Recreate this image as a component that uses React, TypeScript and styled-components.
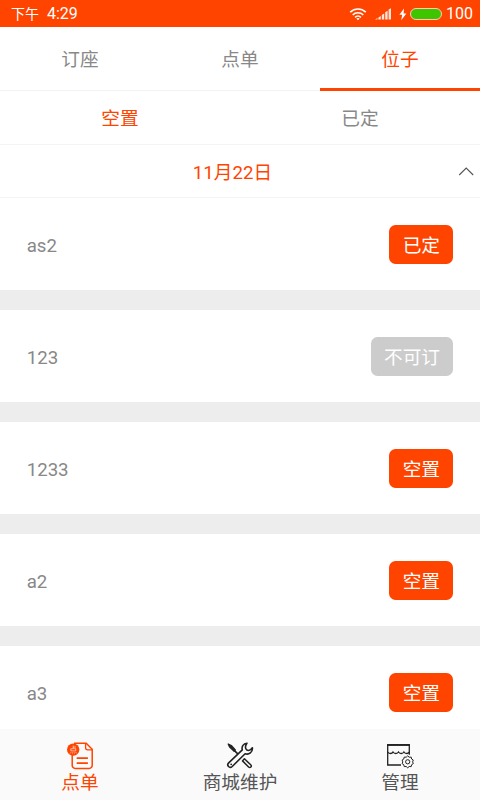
import React, { useState } from 'react'
import styled, { createGlobalStyle } from 'styled-components'

type Seat = {
  name: string
  status: string
  disabled?: boolean
}

const seats: Seat[] = [
  { name: 'as2', status: '已定' },
  { name: '123', status: '不可订', disabled: true },
  { name: '1233', status: '空置' },
  { name: 'a2', status: '空置' },
  { name: 'a3', status: '空置' },
]

const tabs = ['订座', '点单', '位子']
const filters = ['空置', '已定']

function WifiIcon() {
  return (
    <svg width='18' height='14' viewBox='0 0 18 14' fill='none' stroke='#fff' strokeWidth='1.6'>
      <path d='M1.2 5.2C5.7.9 12.3.9 16.8 5.2' />
      <path d='M3.7 7.9c3.1-2.9 7.5-2.9 10.6 0' />
      <path d='M6.1 10.3c1.8-1.6 4-1.6 5.8 0' />
      <path d='M7.3 11.6 9 13.2l1.7-1.6Q9 10.2 7.3 11.6z' fill='#fff' stroke='none' />
    </svg>
  )
}

function SignalIcon() {
  return (
    <svg width='17' height='12' viewBox='0 0 17 12' fill='#ffe6dc'>
      <path d='M0 11.5 2.4 10v1.5zM3.4 9.4l2.4-1.5v3.6H3.4zM6.8 7l2.4-1.4v5.9H6.8zM10.2 4.2l2.4-1.4v8.7h-2.4zM13.6 1.6 16 .3v11.2h-2.4z' />
    </svg>
  )
}

function BoltIcon() {
  return (
    <svg width='8' height='13' viewBox='0 0 8 13' fill='#fff'>
      <path d='M5 .5.4 6.8h2.8L2.2 12.3 7.4 5.4H4.6z' />
    </svg>
  )
}

function OrderIcon() {
  return (
    <svg width='28' height='28' viewBox='0 0 28 28' fill='none' stroke='#ff4400' strokeWidth='1.5'>
      <path d='M8 1.2h12.2l6 6v16.2a3 3 0 0 1-3 3H9.2a3 3 0 0 1-3-3V11' />
      <path d='M19.6 1.4v4.4a2 2 0 0 0 2 2h4.7' strokeWidth='1.3' />
      <path d='M10.7 16.2h11.2M10.7 21.2h11.2' strokeWidth='1.8' />
      <circle cx='7.2' cy='7.6' r='6.2' fill='#ff4400' stroke='none' />
      <path d='M7.2 3.6v3M7.2 5H10M4.8 6.7h5v2.2h-5zM4.1 11.4l.8-1.1M6.3 10.3l.2 1.2M8.1 10.3l.4 1.2M9.7 10.2l.9 1.1' stroke='#fff' strokeWidth='.6' />
    </svg>
  )
}

function ToolsIcon() {
  return (
    <svg width='28' height='28' viewBox='0 0 28 28' fill='none' stroke='#222' strokeLinejoin='round' strokeLinecap='round'>
      <path d='m2.2 2 3.1 1.5 4 4.5-1.2 1.2-4.5-4.1z' fill='#222' strokeWidth='1.3' />
      <path d='m8.5 8.6 3 3' strokeWidth='1.6' />
      <path
        d='M20.9 1.2c-3.4.3-5.6 3.2-4.6 6.7L2.7 20.9c-2.5 2.5.9 6 3.5 3.6L19.1 11.8c3.8 1.3 7.8-1.7 7.3-6.1-1.3 2-3.7 3.3-5.5 2.3-2-1.2-1.8-4.4 0-6.8z'
        strokeWidth='1.6'
      />
      <circle cx='5.2' cy='22.3' r='.9' fill='#222' stroke='none' />
      <path d='m18.4 16.8 6.3 6c1.6 1.6-.5 3.7-2.1 2.2l-6.1-6.1z' strokeWidth='1.5' />
    </svg>
  )
}

function ShopIcon() {
  return (
    <svg width='28' height='28' viewBox='0.7 0 28 28' fill='none' stroke='#222' strokeWidth='1.3'>
      <path d='M2.4 10.5V23h13.3M24 10.5v2.3M2.4 10.5V3H24v7.5' />
      <path d='M1.7 2.9h23' strokeWidth='1.7' />
      <path d='M2.4 10c1.2 2 4.3 2 5.3 0 1.3 2 4.3 2 5.5 0 1.2 2 4.2 2 5.4 0 1.3 2 4.3 2 5.4 0' />
      <path
        d='m22.4 13.9 1.5 1.3 2-.1.4 1.9 1.7 1-.7 1.9.7 1.7-1.7 1.1-.4 1.9-2-.1-1.5 1.3-1.5-1.3-2 .1-.4-1.9-1.7-1.1.7-1.7-.7-1.9 1.7-1 .4-1.9 2 .1z'
        strokeWidth='1'
        strokeLinejoin='round'
      />
      <circle cx='22.4' cy='19.8' r='2.1' strokeWidth='1' />
    </svg>
  )
}

const navItems = [
  { label: '点单', icon: <OrderIcon /> },
  { label: '商城维护', icon: <ToolsIcon /> },
  { label: '管理', icon: <ShopIcon /> },
]

export default function App() {
  const [tab, setTab] = useState(2)
  const [filter, setFilter] = useState(0)
  const [nav, setNav] = useState(0)

  return (
    <StyledScreen>
      <GlobalStyle />
      <StyledStatusBar>
        <StyledPeriod>下午</StyledPeriod>
        <span>4:29</span>
        <StyledStatusIcons>
          <WifiIcon />
          <SignalIcon />
          <BoltIcon />
          <StyledBattery />
          <span>100</span>
        </StyledStatusIcons>
      </StyledStatusBar>
      <StyledTabs>
        {tabs.map((label, index) => (
          <StyledTab key={label} $active={index === tab} onClick={() => setTab(index)}>
            {label}
          </StyledTab>
        ))}
      </StyledTabs>
      <StyledFilters>
        {filters.map((label, index) => (
          <StyledFilter key={label} $active={index === filter} onClick={() => setFilter(index)}>
            {label}
          </StyledFilter>
        ))}
      </StyledFilters>
      <StyledDate>
        <StyledDateText>11月22日</StyledDateText>
        <svg width='16' height='9' viewBox='0 0 16 9' fill='none' stroke='#555' strokeWidth='1.1'>
          <path d='m1.2 8 7-7 7 7' />
        </svg>
      </StyledDate>
      <StyledList>
        {seats.map((seat) => (
          <StyledRow key={seat.name}>
            <StyledName>{seat.name}</StyledName>
            <StyledButton disabled={seat.disabled}>{seat.status}</StyledButton>
          </StyledRow>
        ))}
      </StyledList>
      <StyledNav>
        {navItems.map((item, index) => (
          <StyledNavItem key={item.label} $active={index === nav} onClick={() => setNav(index)}>
            {item.icon}
            <span>{item.label}</span>
          </StyledNavItem>
        ))}
      </StyledNav>
    </StyledScreen>
  )
}

const GlobalStyle = createGlobalStyle`
  body {
    margin: 0;
  }
  * {
    box-sizing: border-box;
  }
`

const StyledScreen = styled.div`
  display: flex;
  flex-direction: column;
  width: 480px;
  height: 800px;
  overflow: hidden;
  background: #fff;
  color: #888;
  font-family: Roboto, 'Noto Sans CJK SC', sans-serif;
  font-size: 18.67px;
  font-weight: 400;
`

const StyledStatusBar = styled.div`
  display: flex;
  align-items: center;
  flex: none;
  height: 26.5px;
  padding: 2px 7px 0 11px;
  background: #ff4400;
  color: #fff;
  font-size: 16px;
  line-height: 24px;
`

const StyledPeriod = styled.span`
  margin-right: 8px;
  font-size: 14px;
`

const StyledStatusIcons = styled.div`
  display: flex;
  align-items: center;
  margin-left: auto;

  svg {
    flex: none;
    margin-right: 8px;
  }
  svg + svg {
    margin-right: 7px;
  }
  svg + svg + svg {
    margin-right: 3px;
  }
`

const StyledBattery = styled.div`
  width: 32px;
  height: 12px;
  margin-right: 4px;
  border: 1px solid #ffc9b3;
  border-radius: 6px;
  background: #3fc400;
`

const StyledTabs = styled.div`
  display: flex;
  flex: none;
  height: 64.5px;
  border-bottom: 1px solid #f2f2f2;
`

const StyledTab = styled.div<{ $active: boolean }>`
  display: flex;
  flex: 1;
  align-items: center;
  justify-content: center;
  padding-top: 1px;
  margin-bottom: -1px;
  border-bottom: 3px solid ${({ $active }) => ($active ? '#ff4400' : 'transparent')};
  color: ${({ $active }) => ($active ? '#ff4400' : 'inherit')};
`

const StyledFilters = styled.div`
  display: flex;
  flex: none;
  height: 54px;
  padding-bottom: 2px;
  border-bottom: 1px solid #f4f4f4;
`

const StyledFilter = styled.div<{ $active: boolean }>`
  display: flex;
  flex: 1;
  align-items: center;
  justify-content: center;
  color: ${({ $active }) => ($active ? '#ff4400' : 'inherit')};
`

const StyledDate = styled.div`
  display: flex;
  flex: none;
  align-items: center;
  height: 53.4px;
  padding: 0 6px;
  border-bottom: 1px solid #f4f4f4;
`

const StyledDateText = styled.span`
  flex: 1;
  padding: 0 0 1px 1px;
  color: #ff4400;
  text-align: center;
`

const StyledList = styled.div`
  display: flex;
  flex: 1;
  flex-direction: column;
  gap: 20px;
  min-height: 0;
  overflow: hidden;
  background: #ededed;
`

const StyledRow = styled.div`
  display: flex;
  flex: none;
  align-items: center;
  justify-content: space-between;
  height: 92px;
  padding: 0 26.67px;
  background: #fff;
`

const StyledName = styled.span`
  padding-top: 3px;
`

const StyledButton = styled.button`
  height: 39px;
  padding: 0 13.33px 2px;
  border: 0;
  border-radius: 6.5px;
  background: #ff4400;
  color: #fff;
  font: inherit;

  &:disabled {
    background: #ccc;
  }
`

const StyledNav = styled.div`
  display: flex;
  flex: none;
  height: 71px;
  background: #fafafa;
`

const StyledNavItem = styled.div<{ $active: boolean }>`
  display: flex;
  flex: 1;
  flex-direction: column;
  align-items: center;
  padding-top: 13px;
  color: ${({ $active }) => ($active ? '#ff4400' : '#555')};
  line-height: 27px;

  svg {
    flex: none;
    height: 28px;
  }
`
